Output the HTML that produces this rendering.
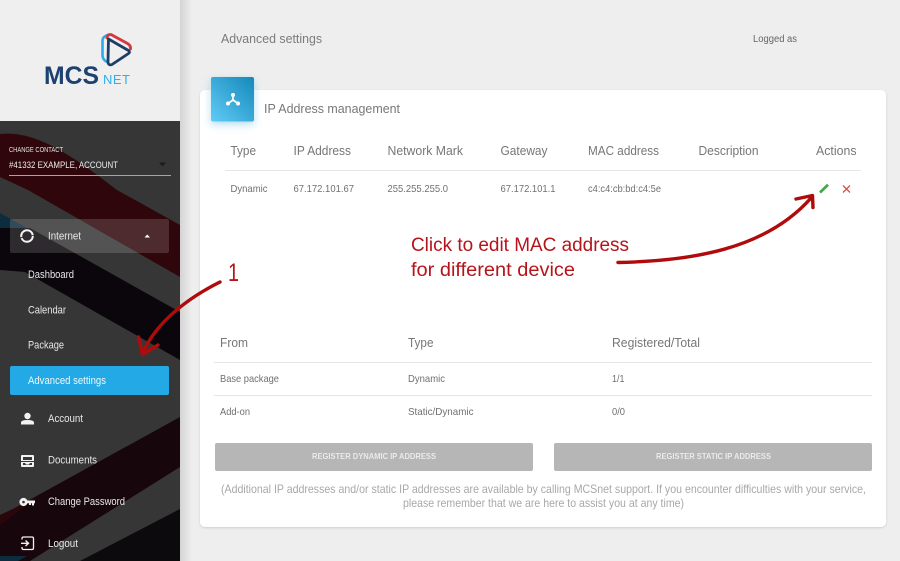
<!DOCTYPE html>
<html lang="en">
<head>
<meta charset="utf-8">
<title>Advanced settings</title>
<style>
html,body{margin:0;padding:0;width:900px;height:561px;overflow:hidden;background:#eee}
svg{display:block;position:absolute;left:0;top:0}
text{font-family:"Liberation Sans",sans-serif}
</style>
</head>
<body>
<svg width="900" height="561" viewBox="0 0 900 561" xmlns="http://www.w3.org/2000/svg">
<defs>
<linearGradient id="gut" x1="0" x2="1" y1="0" y2="0"><stop offset="0" stop-color="#d4d4d4"/><stop offset="1" stop-color="#eeeeee"/></linearGradient>
<linearGradient id="ib" x1="0" y1="1" x2="1" y2="0"><stop offset="0" stop-color="#62cbf7"/><stop offset="1" stop-color="#1489ba"/></linearGradient>
<filter id="sh" x="-5%" y="-5%" width="110%" height="110%"><feDropShadow dx="0" dy="1" stdDeviation="1" flood-color="#000" flood-opacity=".14"/></filter>
<filter id="sh2" x="-40%" y="-40%" width="180%" height="180%"><feDropShadow dx="0" dy="3" stdDeviation="4" flood-color="#2a9fd6" flood-opacity=".35"/></filter>
</defs>
<rect width="900" height="561" fill="#eeeeee"/>
<rect x="180" y="0" width="12" height="561" fill="url(#gut)"/>

<!-- sidebar -->
<rect x="0" y="0" width="180" height="121" fill="#efefef"/>
<rect x="0" y="121" width="180" height="440" fill="#363636"/>
<path d="M0,134 C35,130 72,155 117,190 L180,225 L180,277 L28,190 L0,177Z" fill="#2e060b"/>
<path d="M0,213 L27,228 L0,228Z" fill="#0d2c3e"/>
<path d="M0,228 L30,228 L180,312 L180,360 L25,272 L0,270Z" fill="#0a060b"/>
<path d="M180,417 L180,467 L30,561 L0,561 L0,515 L13,509Z" fill="#17060b"/>
<path d="M0,515 L13,509 L40,495 L0,525Z" fill="#2a060b"/>
<path d="M0,561 L0,556 L27,556 L18,561Z" fill="#0d2c3e"/>
<path d="M180,509 L80,561 L180,561Z" fill="#0d0a0e"/>

<!-- logo -->
<g fill="none" stroke-linecap="round" stroke-linejoin="round">
<path d="M109,34.500 L105.500,36 Q102.500,37.500 102.500,41 L102.500,55 Q102.500,59 105.500,61 L108,62.500" stroke="#2fa9e8" stroke-width="2.600"/>
<path d="M107,38 Q107,34.500 111,34.500 L127.500,43.500 Q131,45.500 130.500,49" stroke="#d5383f" stroke-width="2.800"/>
<path d="M108.500,39 L128.500,50.500 Q130.500,52 128.500,53.500 L112,64.500 Q108.500,66 108,62 Z" stroke="#1d3d68" stroke-width="2.800"/>
</g>
<text x="44" y="84" font-size="25" font-weight="700" fill="#1d4170" textLength="55" lengthAdjust="spacingAndGlyphs">MCS</text>
<text x="103" y="84" font-size="13" fill="#2fb0ee" textLength="27" lengthAdjust="spacing">NET</text>

<!-- contact -->
<text x="9" y="152" font-size="7" fill="#e4e4e4" textLength="54" lengthAdjust="spacingAndGlyphs">CHANGE CONTACT</text>
<text x="9" y="168" font-size="9" fill="#eeeeee" textLength="109" lengthAdjust="spacingAndGlyphs">#41332 EXAMPLE, ACCOUNT</text>
<path d="M159,162.500 H166 L162.500,166.500Z" fill="#1d1d1d"/>
<rect x="9" y="175" width="162" height="1" fill="#a5a5a5"/>

<!-- nav -->
<rect x="10" y="219" width="159" height="34" rx="2" fill="#ffffff" fill-opacity=".15"/>
<circle cx="27" cy="236" r="5.800" fill="none" stroke="#f2f2f2" stroke-width="2" stroke-dasharray="16 1 18.400 1"/>
<g font-size="11" fill="#e8e8e8">
<text x="48" y="239.500" textLength="33" lengthAdjust="spacingAndGlyphs">Internet</text>
<text x="28" y="278" textLength="46" lengthAdjust="spacingAndGlyphs">Dashboard</text>
<text x="28" y="313.500" textLength="38" lengthAdjust="spacingAndGlyphs">Calendar</text>
<text x="28" y="348.500" textLength="36" lengthAdjust="spacingAndGlyphs">Package</text>
</g>
<path d="M144.500,237.500 H150 L147.200,234.500Z" fill="#ffffff"/>
<rect x="10" y="366" width="159" height="29" rx="2" fill="#22a9e6"/>
<text x="28" y="384" font-size="11" fill="#f2f6fa" textLength="78" lengthAdjust="spacingAndGlyphs">Advanced settings</text>

<circle cx="27.500" cy="416" r="3.200" fill="#f2f2f2"/>
<path d="M21,424.500 V422.500 Q21,420 27.500,420 Q34,420 34,422.500 V424.500Z" fill="#f2f2f2"/>
<g font-size="11" fill="#e8e8e8">
<text x="48" y="422" textLength="35" lengthAdjust="spacingAndGlyphs">Account</text>
<text x="48" y="463.500" textLength="49" lengthAdjust="spacingAndGlyphs">Documents</text>
<text x="48" y="505" textLength="77" lengthAdjust="spacingAndGlyphs">Change Password</text>
<text x="48" y="547" textLength="30" lengthAdjust="spacingAndGlyphs">Logout</text>
</g>

<rect x="21" y="455" width="13" height="12" rx="1" fill="#f2f2f2"/>
<rect x="23" y="457" width="9" height="3" fill="#363636"/>
<rect x="21" y="461" width="13" height="1" fill="#363636"/>
<path d="M23,463 H25 L26,464.500 H29 L30,463 H32 V465 H23Z" fill="#363636"/>

<circle cx="23.500" cy="502" r="2.700" fill="none" stroke="#f2f2f2" stroke-width="2.800"/>
<path d="M26,500.500 H35 V503.300 H34 V505.500 H32 V503.300 H31 V505 H29 V503.300 H26Z" fill="#f2f2f2"/>

<path d="M22,539.500 V538.500 Q22,537 23.500,537 H32 Q33.500,537 33.500,538.500 V548 Q33.500,549.500 32,549.500 H23.500 Q22,549.500 22,548 V547" fill="none" stroke="#f2f2f2" stroke-width="1.300"/>
<path d="M21,543.300 H28 M25.500,540.500 L28.500,543.300 L25.500,546" fill="none" stroke="#f2f2f2" stroke-width="1.400"/>

<!-- header -->
<text x="221" y="43" font-size="13" fill="#7b7b7b" textLength="101" lengthAdjust="spacingAndGlyphs">Advanced settings</text>
<text x="753" y="42" font-size="10" fill="#666666" textLength="44" lengthAdjust="spacingAndGlyphs">Logged as</text>

<!-- card -->
<rect x="200" y="90" width="686" height="437" rx="5" fill="#ffffff" filter="url(#sh)"/>
<rect x="211" y="77" width="43" height="44.500" rx="2" fill="url(#ib)" filter="url(#sh2)"/>
<g fill="#ffffff">
<path d="M233,100 V95 M233,100 L228,103.500 M233,100 L238,103.500" stroke="#ffffff" stroke-width="1.700" fill="none"/>
<circle cx="233" cy="95" r="2"/><circle cx="228" cy="103.500" r="2"/><circle cx="238" cy="103.500" r="2"/>
</g>
<text x="264" y="113" font-size="13" fill="#777777" textLength="136" lengthAdjust="spacingAndGlyphs">IP Address management</text>

<!-- table 1 -->
<g font-size="13" fill="#767676">
<text x="230.500" y="155" textLength="25.500" lengthAdjust="spacingAndGlyphs">Type</text>
<text x="293.500" y="155" textLength="57.500" lengthAdjust="spacingAndGlyphs">IP Address</text>
<text x="387.500" y="155" textLength="75.500" lengthAdjust="spacingAndGlyphs">Network Mark</text>
<text x="500.500" y="155" textLength="47" lengthAdjust="spacingAndGlyphs">Gateway</text>
<text x="588" y="155" textLength="71" lengthAdjust="spacingAndGlyphs">MAC address</text>
<text x="698.500" y="155" textLength="60" lengthAdjust="spacingAndGlyphs">Description</text>
<text x="816" y="155" textLength="40.500" lengthAdjust="spacingAndGlyphs">Actions</text>
</g>
<rect x="225" y="170" width="636" height="1" fill="#e6e6e6"/>
<g font-size="10.500" fill="#707070">
<text x="230.500" y="192" textLength="37" lengthAdjust="spacingAndGlyphs">Dynamic</text>
<text x="293.500" y="192" textLength="60.500" lengthAdjust="spacingAndGlyphs">67.172.101.67</text>
<text x="387.500" y="192" textLength="60.500" lengthAdjust="spacingAndGlyphs">255.255.255.0</text>
<text x="500.500" y="192" textLength="55" lengthAdjust="spacingAndGlyphs">67.172.101.1</text>
<text x="588" y="192" textLength="73" lengthAdjust="spacingAndGlyphs">c4:c4:cb:bd:c4:5e</text>
</g>
<path d="M820,192.500 L828,184.800" stroke="#43a84a" stroke-width="2.800" fill="none"/>
<path d="M843,185.500 L850,192.500 M850,185.500 L843,192.500" stroke="#d9534f" stroke-width="1.400" fill="none"/>

<!-- annotation -->
<g fill="#b5141a">
<text x="411" y="251" font-size="19" textLength="218" lengthAdjust="spacingAndGlyphs">Click to edit MAC address</text>
<text x="411" y="276" font-size="19" textLength="164" lengthAdjust="spacingAndGlyphs">for different device</text>
<text x="228" y="281" font-size="25" textLength="11" lengthAdjust="spacingAndGlyphs">1</text>
</g>
<g fill="none" stroke="#b00b0b" stroke-linecap="round" stroke-linejoin="round">
<path d="M618,262.500 C690,261 765,250 811,198" stroke-width="3.400"/>
<path d="M796,199 L812.500,195.500 L813,207.500" stroke-width="3.400"/>
<path d="M220,282 C190,297 158,320 143,352" stroke-width="3.400"/>
<path d="M138.500,337 L142.500,354.500 L158,345" stroke-width="3.400"/>
</g>

<!-- table 2 -->
<g font-size="13" fill="#767676">
<text x="220" y="347" textLength="28" lengthAdjust="spacingAndGlyphs">From</text>
<text x="408" y="347" textLength="25.500" lengthAdjust="spacingAndGlyphs">Type</text>
<text x="612" y="347" textLength="88" lengthAdjust="spacingAndGlyphs">Registered/Total</text>
</g>
<rect x="214" y="362" width="658" height="1" fill="#e6e6e6"/>
<rect x="214" y="395" width="658" height="1" fill="#e6e6e6"/>
<g font-size="10.500" fill="#707070">
<text x="220" y="382" textLength="59" lengthAdjust="spacingAndGlyphs">Base package</text>
<text x="408" y="382" textLength="37" lengthAdjust="spacingAndGlyphs">Dynamic</text>
<text x="612" y="382" textLength="12.500" lengthAdjust="spacingAndGlyphs">1/1</text>
<text x="220" y="415" textLength="30" lengthAdjust="spacingAndGlyphs">Add-on</text>
<text x="408" y="415" textLength="65.500" lengthAdjust="spacingAndGlyphs">Static/Dynamic</text>
<text x="612" y="415" textLength="13" lengthAdjust="spacingAndGlyphs">0/0</text>
</g>

<!-- buttons -->
<rect x="215" y="443" width="318" height="28" rx="2" fill="#b6b6b6"/>
<rect x="554" y="443" width="318" height="28" rx="2" fill="#b6b6b6"/>
<text x="312" y="459" font-size="8.500" font-weight="700" fill="#eaeaea" textLength="124" lengthAdjust="spacingAndGlyphs">REGISTER DYNAMIC IP ADDRESS</text>
<text x="656" y="459" font-size="8.500" font-weight="700" fill="#eaeaea" textLength="115" lengthAdjust="spacingAndGlyphs">REGISTER STATIC IP ADDRESS</text>

<!-- note -->
<text x="221" y="493" font-size="12" fill="#a8a8a8" textLength="645" lengthAdjust="spacingAndGlyphs">(Additional IP addresses and/or static IP addresses are available by calling MCSnet support. If you encounter difficulties with your service,</text>
<text x="403" y="507" font-size="12" fill="#a8a8a8" textLength="281" lengthAdjust="spacingAndGlyphs">please remember that we are here to assist you at any time)</text>
</svg>
</body>
</html>
